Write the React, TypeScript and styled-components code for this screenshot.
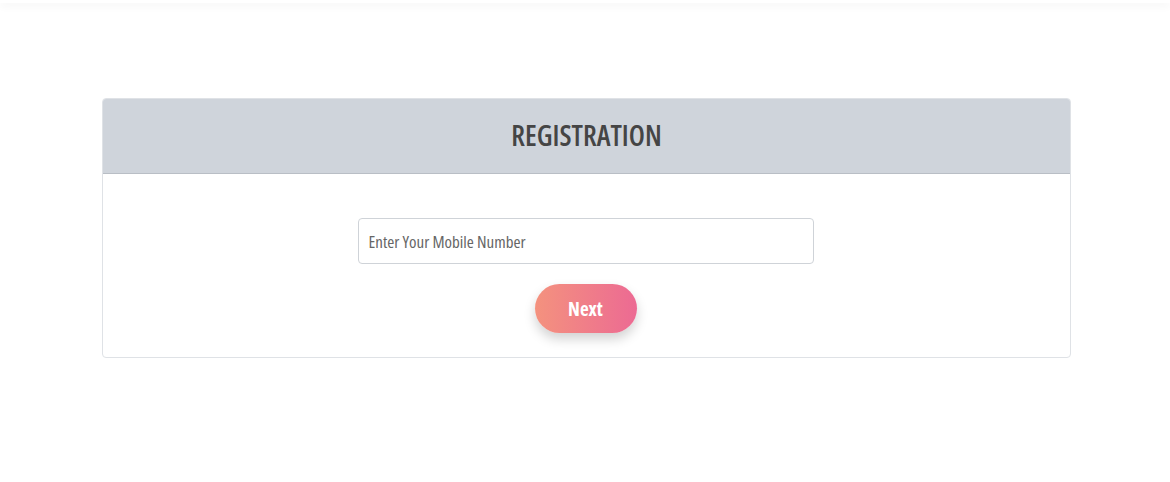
import React from "react";
import styled, { createGlobalStyle } from "styled-components";

const Global = createGlobalStyle`
  html, body { margin: 0; padding: 0; background: #ffffff; }
  body { font-family: "Open Sans", Lato, sans-serif; }
  * { box-sizing: border-box; }
`;

const Page = styled.div`
  width: 1170px;
  height: 482px;
  background: #fff;
  display: flex;
  flex-direction: column;
`;

const TopBar = styled.div`
  height: 3px;
  background: #fff;
  box-shadow: 0 2px 8px rgba(0, 0, 0, 0.08);
`;

const Main = styled.main`
  padding: 95px 99px 0 102px;
`;

const Card = styled.section`
  border: 1px solid #dfe2e6;
  border-radius: 4px;
  overflow: hidden;
  background: #fff;
`;

const CardHeader = styled.header`
  height: 75px;
  padding-bottom: 2px;
  background: #cfd4db;
  border-bottom: 1px solid #b9bec5;
  display: flex;
  align-items: center;
  justify-content: center;
`;

const Title = styled.h2`
  margin: 0;
  font-family: "Open Sans", sans-serif;
  font-stretch: 75%;
  font-weight: 600;
  font-size: 28.4px;
  color: #454545;
  letter-spacing: 0;
`;

const CardBody = styled.div`
  padding: 44px 0 24px;
  display: flex;
  flex-direction: column;
  align-items: center;
  gap: 20px;
`;

const Input = styled.input`
  width: 456px;
  height: 46px;
  margin-right: 2px;
  border: 1px solid #cfd3d8;
  border-radius: 4px;
  padding: 0 10px;
  font-family: "Open Sans", sans-serif;
  font-stretch: 75%;
  font-size: 17px;
  color: #555;
  outline: none;
  &::placeholder { color: #666; }
`;

const NextButton = styled.button`
  width: 102px;
  height: 49px;
  margin-right: 2px;
  border: none;
  border-radius: 25px;
  background: linear-gradient(90deg, #f4927e 0%, #ec6a93 100%);
  color: #fff;
  font-family: "Open Sans", sans-serif;
  font-stretch: 75%;
  font-weight: 700;
  font-size: 19px;
  box-shadow: 0 6px 12px rgba(0, 0, 0, 0.18);
  cursor: pointer;
`;

export default function App() {
  return (
    <>
      <Global />
      <Page>
        <TopBar />
        <Main>
          <Card>
            <CardHeader>
              <Title>REGISTRATION</Title>
            </CardHeader>
            <CardBody>
              <Input placeholder="Enter Your Mobile Number" />
              <NextButton>Next</NextButton>
            </CardBody>
          </Card>
        </Main>
      </Page>
    </>
  );
}
